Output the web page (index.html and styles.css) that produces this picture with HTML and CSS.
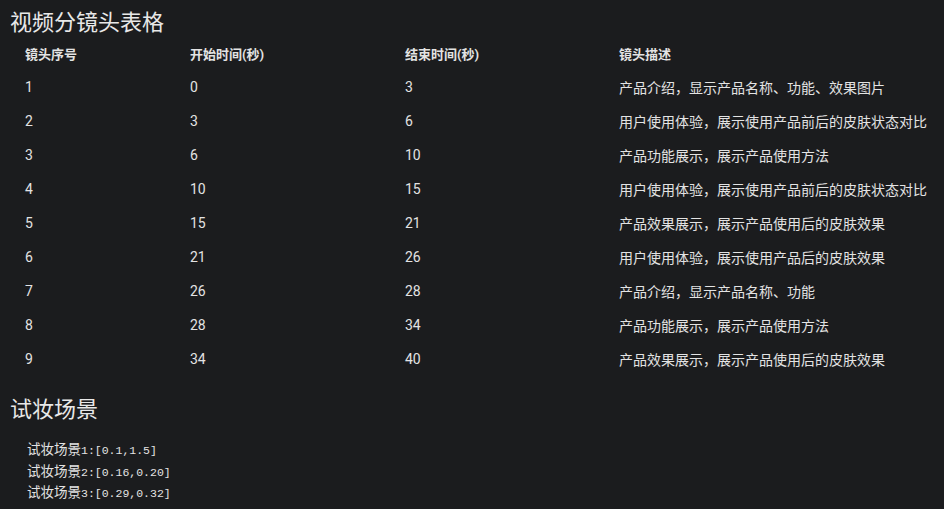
FILE: index.html
```html
<!DOCTYPE html>
<html lang="zh">
<head>
<meta charset="utf-8">
<link rel="stylesheet" href="styles.css">
</head>
<body>
<h2 class="title">视频分镜头表格</h2>
<table class="shots">
<colgroup><col class="c1"><col class="c2"><col class="c3"><col class="c4"></colgroup>
<thead>
<tr><th>镜头序号</th><th>开始时间(秒)</th><th>结束时间(秒)</th><th>镜头描述</th></tr>
</thead>
<tbody>
<tr><td>1</td><td>0</td><td>3</td><td>产品介绍，显示产品名称、功能、效果图片</td></tr>
<tr><td>2</td><td>3</td><td>6</td><td>用户使用体验，展示使用产品前后的皮肤状态对比</td></tr>
<tr><td>3</td><td>6</td><td>10</td><td>产品功能展示，展示产品使用方法</td></tr>
<tr><td>4</td><td>10</td><td>15</td><td>用户使用体验，展示使用产品前后的皮肤状态对比</td></tr>
<tr><td>5</td><td>15</td><td>21</td><td>产品效果展示，展示产品使用后的皮肤效果</td></tr>
<tr><td>6</td><td>21</td><td>26</td><td>用户使用体验，展示使用产品后的皮肤效果</td></tr>
<tr><td>7</td><td>26</td><td>28</td><td>产品介绍，显示产品名称、功能</td></tr>
<tr><td>8</td><td>28</td><td>34</td><td>产品功能展示，展示产品使用方法</td></tr>
<tr><td>9</td><td>34</td><td>40</td><td>产品效果展示，展示产品使用后的皮肤效果</td></tr>
</tbody>
</table>
<h2 class="title second">试妆场景</h2>
<div class="scenes">
<div class="line"><span class="cjk">试妆场景</span>1:[0.1,1.5]</div>
<div class="line"><span class="cjk">试妆场景</span>2:[0.16,0.20]</div>
<div class="line"><span class="cjk">试妆场景</span>3:[0.29,0.32]</div>
</div>
</body>
</html>
```
FILE: styles.css
```css
html, body {
  margin: 0;
  padding: 0;
  background: #1b1c1e;
  color: #e3e3e3;
  overflow: hidden;
}
body {
  padding: 0 0 0 10px;
  font-family: Roboto, "Noto Sans CJK SC", sans-serif;
}
.title {
  margin: 5px 0 0 0;
  font-size: 22px;
  line-height: 30px;
  font-weight: 400;
  font-family: "Noto Sans CJK SC", sans-serif;
  color: #e8e8e8;
}
.title.second {
  margin-top: 16px;
}
.shots {
  margin-top: 1px;
  border-collapse: collapse;
  table-layout: fixed;
  width: 934px;
  font-size: 14px;
}
.c1 { width: 165px; }
.c2 { width: 215px; }
.c3 { width: 214px; }
.c4 { width: 340px; }
.shots th, .shots td {
  height: 34px;
  padding: 0 0 0 15px;
  text-align: left;
  vertical-align: middle;
  white-space: nowrap;
  font-family: Roboto, "Noto Sans CJK SC", sans-serif;
}
.shots th {
  font-weight: 700;
  font-size: 13px;
}
.scenes {
  margin-top: 18px;
  padding-left: 17px;
  font-family: "Liberation Mono", monospace;
  font-size: 11.5px;
}
.line {
  height: 21.5px;
  line-height: 21.5px;
  white-space: nowrap;
}
.cjk {
  font-family: "Noto Sans CJK SC", sans-serif;
  font-size: 13.5px;
  line-height: 1;
}
```
